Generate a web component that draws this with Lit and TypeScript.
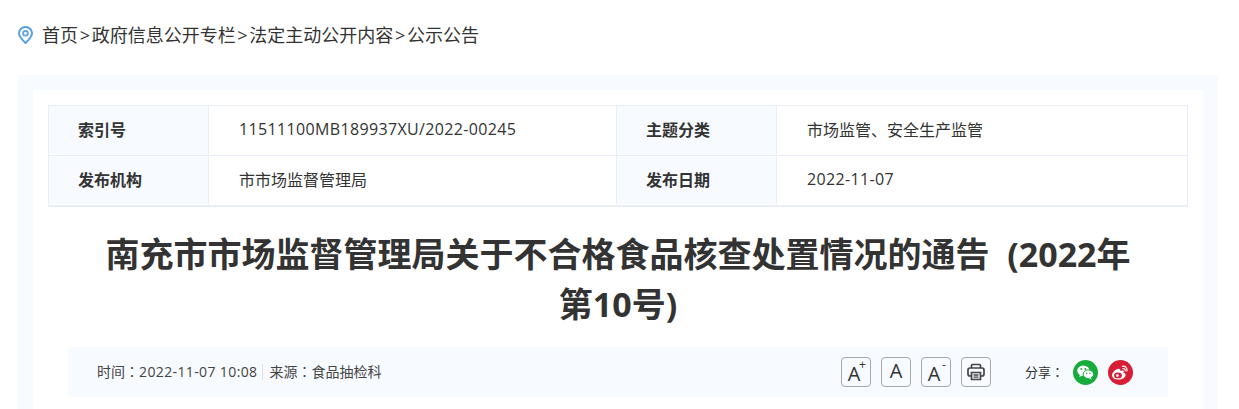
import { LitElement, html, css, svg } from "lit";
import { customElement } from "lit/decorators.js";

@customElement("app-root")
export class AppRoot extends LitElement {
  static styles = css`
    :host {
      display: block;
      height: 409px;
      overflow: hidden;
      background: #fff;
      font-family: "Open Sans", "Noto Sans CJK SC", sans-serif;
      color: #333;
    }
    .crumb {
      height: 75px;
      box-sizing: border-box;
      padding: 24px 0 0 18px;
      display: flex;
      align-items: flex-start;
      gap: 9px;
      font-size: 18px;
      line-height: 22px;
      color: #333;
    }
    .crumb svg { width: 15px; height: 18px; margin-top: 2px; }
    .gt { margin: 0 1.7px; }
    .outer {
      margin: 0 21px 0 18px;
      background: #f7faff;
      padding: 15px 15px 0;
    }
    .inner {
      background: #fff;
      padding: 15px 15px 20px;
    }
    .table {
      display: grid;
      grid-template-columns: 159px 408px 160px 1fr;
      grid-template-rows: 49px 50px;
      border: 1px solid #e9edf7;
      border-bottom-width: 2px;
      box-sizing: border-box;
      height: 102px;
    }
    .c {
      display: flex;
      align-items: center;
      box-sizing: border-box;
      font-size: 16px;
      border-left: 1px solid #e9edf7;
      border-bottom: 1px solid #fff;
      color: #333;
      padding-bottom: 2px;
    }
    .c.first { border-left: 0; }
    .c.row2 { border-top: 1px solid #e9edf7; }
    .c.l {
      background: #f7faff;
      font-weight: 700;
      padding-left: 29px;
      padding-bottom: 3px;
      color: #333;
    }
    .c.v { padding-left: 30px; }
    .c.num { letter-spacing: 0.35px; }
    h1 {
      margin: 22px 50px 0;
      text-align: center;
      font-size: 34px;
      line-height: 50px;
      font-weight: 700;
      word-spacing: 9px;
      color: #333;
    }
    .bar {
      margin: 18px 20px 0;
      height: 50px;
      background: #f7faff;
      display: flex;
      align-items: center;
      padding: 0 35px 0 29px;
      font-size: 14px;
      color: #444;
    }
    .txt { position: relative; top: -1px; }
    .date { letter-spacing: 0.38px; }
    .col { font-family: "Noto Sans CJK TC", sans-serif; }
    .sep {
      display: inline-block;
      width: 1px;
      height: 16px;
      background: #dcdfe6;
      margin: 0 6px 0 5px;
    }
    .spacer { flex: 1; }
    .tools { display: flex; gap: 10px; margin-right: 34px; }
    .tool {
      width: 28px;
      height: 28px;
      border: 1px solid #a8a8a8;
      border-radius: 4px;
      display: flex;
      align-items: center;
      justify-content: center;
      font-size: 20px;
      line-height: 28px;
      color: #333;
      position: relative;
      font-family: "Open Sans", sans-serif;
    }
    .tool sup {
      position: absolute;
      font-size: 12px;
      line-height: 12px;
      top: 1px;
      right: 4px;
    }
    .tool .big { font-size: 20px; margin: 3px 4px 0 0; }
    .tool .mid { margin-top: -2px; }
    .tool svg { width: 20px; height: 20px; }
    .share { margin-right: 9px; font-size: 13px; color: #333; position: relative; top: -1px; }
    .ico {
      width: 25px;
      height: 25px;
      border-radius: 50%;
      display: flex;
      align-items: center;
      justify-content: center;
    }
    .ico svg { width: 25px; height: 25px; display: block; }
    .wx { background: #17ab3c; margin-right: 10px; }
    .wb { background: #d81e37; }
  `;

  private wx() {
    return svg`<svg viewBox="0 0 25 25">
      <ellipse cx="10.4" cy="10.6" rx="6.2" ry="5.2" fill="#fff"/>
      <path d="M7 14.5 L6.3 17 L9.3 15.5Z" fill="#fff"/>
      <ellipse cx="15.4" cy="14.2" rx="5.2" ry="4.3" fill="#fff" stroke="#17ab3c" stroke-width="1"/>
      <path d="M17.6 17.6 L18.8 19.6 L15.8 18.3Z" fill="#fff"/>
      <circle cx="8.3" cy="9" r=".9" fill="#17ab3c"/><circle cx="12.3" cy="9" r=".9" fill="#17ab3c"/>
      <circle cx="13.8" cy="13.3" r=".7" fill="#17ab3c"/><circle cx="17" cy="13.3" r=".7" fill="#17ab3c"/>
    </svg>`;
  }

  private wb() {
    return svg`<svg viewBox="0 0 25 25">
      <path d="M10.6 19.6c-3.6 0-6.6-1.7-6.6-4.3 0-2.8 3.8-6.6 6.7-6.6 1.4 0 1.9 1 1.5 2.4 1.7-.7 3.6-.8 3.6.6 0 .4-.1.7-.3 1 1.2.4 2.1 1.1 2.1 2.3 0 2.4-3.2 4.6-7 4.6z" fill="#fff"/>
      <ellipse cx="10" cy="15.4" rx="3.9" ry="2.9" fill="#d81e37"/>
      <circle cx="9.4" cy="15.6" r="1.4" fill="#fff"/>
      <path d="M14.4 6.3c2.9-.6 5.3 1.9 4.5 4.7M14.9 8.6c1.5-.3 2.7 1 2.3 2.3" fill="none" stroke="#fff" stroke-width="1.2" stroke-linecap="round"/>
    </svg>`;
  }

  render() {
    return html`
      <div class="crumb">
        <svg viewBox="0 0 15 18" fill="none">
          <path d="M7.5 1C3.9 1 1 3.8 1 7.2c0 3.8 4 7.2 6.5 9.8C10 14.4 14 11 14 7.2 14 3.8 11.1 1 7.5 1z" stroke="#5b9fe8" stroke-width="2"/>
          <circle cx="7.5" cy="7.2" r="2.4" stroke="#5b9fe8" stroke-width="1.7"/>
        </svg>
        <span>首页<span class="gt">&gt;</span>政府信息公开专栏<span class="gt">&gt;</span>法定主动公开内容<span class="gt">&gt;</span>公示公告</span>
      </div>
      <div class="outer">
        <div class="inner">
          <div class="table">
            <div class="c l first">索引号</div>
            <div class="c v num">11511100MB189937XU/2022-00245</div>
            <div class="c l">主题分类</div>
            <div class="c v">市场监管、安全生产监管</div>
            <div class="c l first row2">发布机构</div>
            <div class="c v row2">市市场监督管理局</div>
            <div class="c l row2">发布日期</div>
            <div class="c v row2 num">2022-11-07</div>
          </div>
          <h1>南充市市场监督管理局关于不合格食品核查处置情况的通告 (2022年第10号)</h1>
          <div class="bar">
            <span class="txt">时间<span class="col">：</span><span class="date">2022-11-07 10:08</span></span><span class="sep"></span><span class="txt">来源<span class="col">：</span>食品抽检科</span>
            <span class="spacer"></span>
            <div class="tools">
              <div class="tool"><span class="big">A</span><sup>+</sup></div>
              <div class="tool"><span class="mid">A</span></div>
              <div class="tool"><span class="big">A</span><sup>-</sup></div>
              <div class="tool">
                <svg viewBox="0 0 20 20" fill="none" stroke="#444" stroke-width="1.7">
                  <path d="M5.5 6V3.5a1 1 0 0 1 1-1h7a1 1 0 0 1 1 1V6"/>
                  <rect x="2" y="6" width="16" height="8" rx="2"/>
                  <path d="M5.5 10.5h9v7h-9z" fill="#f7faff"/>
                  <path d="M7.5 13h5M7.5 15.2h5" stroke-width="1.3"/>
                </svg>
              </div>
            </div>
            <span class="share">分享<span class="col">：</span></span>
            <span class="ico wx">${this.wx()}</span>
            <span class="ico wb">${this.wb()}</span>
          </div>
        </div>
      </div>
    `;
  }
}
